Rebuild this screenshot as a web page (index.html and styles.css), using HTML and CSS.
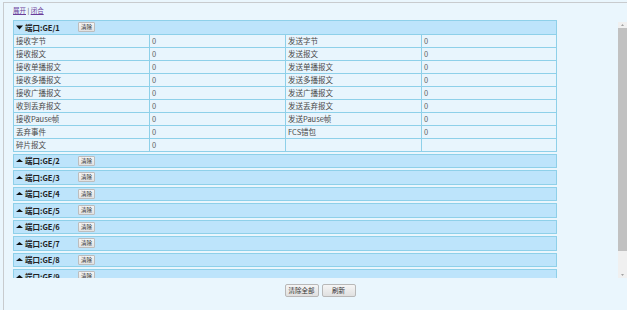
FILE: index.html
```html
<!DOCTYPE html>
<html lang="zh-CN">
<head>
<meta charset="utf-8">
<title>端口统计</title>
<link rel="stylesheet" href="styles.css">
</head>
<body>
<div class="frame">
  <div class="links"><a href="#" class="lnk">展开</a> | <a href="#" class="lnk">闭合</a></div>
  <div class="scroll-wrap">
    <div class="scroll">
      <section class="panel">
        <div class="head">
          <svg class="tri" width="7" height="5" viewBox="0 0 7 5"><polygon points="0,0.5 7,0.5 3.5,4.5"/></svg>
          <span class="title">端口:GE/1</span>
          <button class="btn-sm">清除</button>
        </div>
        <div class="stats">
          <div class="row"><span class="lbl">接收字节</span><span class="val">0</span><span class="lbl">发送字节</span><span class="val">0</span></div>
          <div class="row"><span class="lbl">接收报文</span><span class="val">0</span><span class="lbl">发送报文</span><span class="val">0</span></div>
          <div class="row"><span class="lbl">接收单播报文</span><span class="val">0</span><span class="lbl">发送单播报文</span><span class="val">0</span></div>
          <div class="row"><span class="lbl">接收多播报文</span><span class="val">0</span><span class="lbl">发送多播报文</span><span class="val">0</span></div>
          <div class="row"><span class="lbl">接收广播报文</span><span class="val">0</span><span class="lbl">发送广播报文</span><span class="val">0</span></div>
          <div class="row"><span class="lbl">收到丢弃报文</span><span class="val">0</span><span class="lbl">发送丢弃报文</span><span class="val">0</span></div>
          <div class="row"><span class="lbl">接收Pause帧</span><span class="val">0</span><span class="lbl">发送Pause帧</span><span class="val">0</span></div>
          <div class="row"><span class="lbl">丢弃事件</span><span class="val">0</span><span class="lbl">FCS错包</span><span class="val">0</span></div>
          <div class="row"><span class="lbl">碎片报文</span><span class="val">0</span><span class="lbl"></span><span class="val"></span></div>
        </div>
      </section>
      <section class="panel"><div class="head"><svg class="tri" width="7" height="5" viewBox="0 0 7 5"><polygon points="0,4 7,4 3.5,1"/></svg><span class="title">端口:GE/2</span><button class="btn-sm">清除</button></div></section>
      <section class="panel"><div class="head"><svg class="tri" width="7" height="5" viewBox="0 0 7 5"><polygon points="0,4 7,4 3.5,1"/></svg><span class="title">端口:GE/3</span><button class="btn-sm">清除</button></div></section>
      <section class="panel"><div class="head"><svg class="tri" width="7" height="5" viewBox="0 0 7 5"><polygon points="0,4 7,4 3.5,1"/></svg><span class="title">端口:GE/4</span><button class="btn-sm">清除</button></div></section>
      <section class="panel"><div class="head"><svg class="tri" width="7" height="5" viewBox="0 0 7 5"><polygon points="0,4 7,4 3.5,1"/></svg><span class="title">端口:GE/5</span><button class="btn-sm">清除</button></div></section>
      <section class="panel"><div class="head"><svg class="tri" width="7" height="5" viewBox="0 0 7 5"><polygon points="0,4 7,4 3.5,1"/></svg><span class="title">端口:GE/6</span><button class="btn-sm">清除</button></div></section>
      <section class="panel"><div class="head"><svg class="tri" width="7" height="5" viewBox="0 0 7 5"><polygon points="0,4 7,4 3.5,1"/></svg><span class="title">端口:GE/7</span><button class="btn-sm">清除</button></div></section>
      <section class="panel"><div class="head"><svg class="tri" width="7" height="5" viewBox="0 0 7 5"><polygon points="0,4 7,4 3.5,1"/></svg><span class="title">端口:GE/8</span><button class="btn-sm">清除</button></div></section>
      <section class="panel"><div class="head"><svg class="tri" width="7" height="5" viewBox="0 0 7 5"><polygon points="0,4 7,4 3.5,1"/></svg><span class="title">端口:GE/9</span><button class="btn-sm">清除</button></div></section>
      <section class="panel"><div class="head"><svg class="tri" width="7" height="5" viewBox="0 0 7 5"><polygon points="0,4 7,4 3.5,1"/></svg><span class="title">端口:GE/10</span><button class="btn-sm">清除</button></div></section>
    </div>
    <div class="vbar">
      <div class="arrow"><svg width="3" height="2" viewBox="0 0 3 2"><polygon points="0,2 3,2 1.5,0"/></svg></div>
      <div class="thumb"></div>
      <div class="track"></div>
      <div class="arrow"><svg width="3" height="2" viewBox="0 0 3 2"><polygon points="0,0 3,0 1.5,2"/></svg></div>
    </div>
  </div>
  <div class="actions"><button class="btn">清除全部</button><button class="btn">刷新</button></div>
</div>
</body>
</html>
```
FILE: styles.css
```css
html, body {
  margin: 0;
  padding: 0;
  overflow: hidden;
  background: #eaf6fd;
  font-family: "Noto Sans CJK SC", "Noto Sans", sans-serif;
  color: #444;
}

.frame {
  box-sizing: border-box;
  height: 308px;
  margin: 2px 0 0 3px;
  border-top: 1px solid #c8cbce;
  border-left: 1px solid #c8cbce;
  padding-left: 9px;
}

.links {
  height: 17px;
  box-sizing: border-box;
  padding-top: 2px;
  font-size: 6.5px;
  line-height: 10px;
  color: #444;
}

.lnk {
  color: #6a3d9a;
  text-decoration: underline;
}

.scroll-wrap {
  display: flex;
  height: 258px;
}

.scroll {
  flex: 1;
  overflow-y: auto;
  scrollbar-width: none;
}

.vbar {
  width: 9px;
  margin-top: 2px;
  display: flex;
  flex-direction: column;
  background: #f0f0f0;
}

.arrow {
  height: 6px;
  display: flex;
  align-items: center;
  justify-content: center;
  flex: none;
}

.arrow svg {
  fill: #a3a3a3;
}

.thumb {
  height: 223px;
  flex: none;
  background: #c1c1c1;
}

.track {
  flex: 1;
}

.panel {
  width: 544px;
  box-sizing: border-box;
  border: 1px solid #8ed0e9;
  margin-bottom: 2px;
}

.head {
  height: 12.5px;
  background: #bde4fb;
  display: flex;
  align-items: center;
  padding-left: 2px;
}

.tri {
  width: 7px;
  height: 5px;
  fill: #111;
  margin-right: 2px;
  flex: none;
}

.title {
  width: 53px;
  font-size: 7.5px;
  font-weight: bold;
  color: #222;
  white-space: nowrap;
}

.btn-sm {
  width: 17px;
  height: 10px;
  padding: 0;
  border: 1px solid #bdbdbd;
  border-radius: 1px;
  background: linear-gradient(#f4f4f4, #e2e2e2);
  font-family: inherit;
  font-size: 5.5px;
  line-height: 8px;
  color: #333;
}

.row {
  display: grid;
  grid-template-columns: 136px 136px 136px 134px;
  height: 13px;
  box-sizing: border-box;
  border-top: 1px solid #8ed0e9;
  background: #e8f5fd;
}

.lbl, .val {
  font-size: 7.5px;
  line-height: 12px;
  padding-left: 2px;
  border-right: 1px solid #8ed0e9;
  white-space: nowrap;
  overflow: hidden;
}

.lbl {
  color: #4a4a4a;
}

.val {
  color: #666;
}

.row > span:last-child {
  border-right: none;
}

.actions {
  display: flex;
  justify-content: center;
  gap: 3px;
  padding-top: 6px;
}

.btn {
  width: 34px;
  height: 13px;
  padding: 0;
  border: 1px solid #b8b8b8;
  border-radius: 2px;
  background: linear-gradient(#f5f5f5, #e0e0e0);
  font-family: inherit;
  font-size: 6.5px;
  line-height: 11px;
  color: #333;
}
```
